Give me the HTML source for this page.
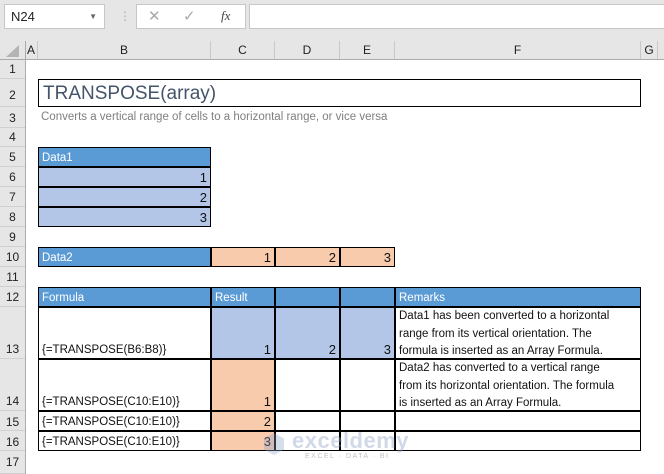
<!DOCTYPE html>
<html><head><style>
*{margin:0;padding:0;box-sizing:border-box}
body{width:664px;height:474px;overflow:hidden;background:#fff;font-family:"Liberation Sans",sans-serif;position:relative}
.a{position:absolute}
.ch{position:absolute;top:41px;height:18px;font-size:12px;color:#222;text-align:center;line-height:18px;border-right:1px solid #c8c8c8}
.rh{position:absolute;left:0;width:25px;font-size:12px;color:#222;text-align:center;border-bottom:1px solid #d0d0d0;background:#e6e6e6}
.c{position:absolute;font-size:11.5px;padding:0 3px;display:flex;align-items:flex-end;line-height:16px;color:#111;border:1px solid #000;margin:-1px 0 0 -1px;white-space:nowrap}
.h{background:#5b9bd5;color:#fff}
.b{background:#b4c6e7;justify-content:flex-end;font-size:13px}
.o{background:#f8cbad;justify-content:flex-end;font-size:13px}
</style></head><body>
<div class="a" style="left:0;top:0;width:664px;height:59px;background:#e6e6e6"></div>
<div class="a" style="left:4px;top:4px;width:101px;height:25px;background:#fff;border:1px solid #c6c6c6;font-size:13px;line-height:23px;padding-left:6px;color:#222">N24<span style="position:absolute;right:7px;top:0;font-size:8px;color:#666">▼</span></div>
<div class="a" style="left:119px;top:9px;color:#aaa;font-size:12px">⋮</div>
<div class="a" style="left:136px;top:4px;width:110px;height:25px;background:#fff;border:1px solid #c6c6c6"></div>
<div class="a" style="left:148px;top:7px;color:#aaa;font-size:15px">✕</div>
<div class="a" style="left:183px;top:7px;color:#aaa;font-size:15px">✓</div>
<div class="a" style="left:221px;top:8px;color:#444;font-size:13px;font-style:italic;font-family:'Liberation Serif',serif">fx</div>
<div class="a" style="left:249px;top:4px;width:420px;height:25px;background:#fff;border:1px solid #c6c6c6"></div>
<div class="a" style="left:0;top:59px;width:664px;height:1px;background:#ababab"></div>
<div class="a" style="left:25px;top:41px;width:1px;height:433px;background:#ababab"></div>
<div class="a" style="left:6px;top:45px;width:0;height:0;border-left:13px solid transparent;border-bottom:12px solid #b4b4b4"></div>
<div class="ch" style="left:25px;width:13px">A</div>
<div class="ch" style="left:38px;width:173px">B</div>
<div class="ch" style="left:211px;width:64px">C</div>
<div class="ch" style="left:275px;width:65px">D</div>
<div class="ch" style="left:340px;width:55px">E</div>
<div class="ch" style="left:395px;width:246px">F</div>
<div class="ch" style="left:641px;width:17px">G</div>
<div class="rh" style="top:60px;height:19px;line-height:19px">1</div>
<div class="rh" style="top:79px;height:28px;line-height:32px">2</div>
<div class="rh" style="top:107px;height:21px;line-height:22px">3</div>
<div class="rh" style="top:128px;height:19px;line-height:19px">4</div>
<div class="rh" style="top:147px;height:20px;line-height:20px">5</div>
<div class="rh" style="top:167px;height:20px;line-height:20px">6</div>
<div class="rh" style="top:187px;height:20px;line-height:20px">7</div>
<div class="rh" style="top:207px;height:20px;line-height:20px">8</div>
<div class="rh" style="top:227px;height:20px;line-height:20px">9</div>
<div class="rh" style="top:247px;height:20px;line-height:20px">10</div>
<div class="rh" style="top:267px;height:20px;line-height:20px">11</div>
<div class="rh" style="top:287px;height:20px;line-height:20px">12</div>
<div class="rh" style="top:307px;height:52px;line-height:84px">13</div>
<div class="rh" style="top:359px;height:52px;line-height:84px">14</div>
<div class="rh" style="top:411px;height:20px;line-height:22px">15</div>
<div class="rh" style="top:431px;height:20px;line-height:22px">16</div>
<div class="rh" style="top:451px;height:23px;line-height:22px">17</div>

<div class="a" style="left:38px;top:79px;width:603px;height:28px;border:1px solid #000;font-size:19px;line-height:27px;padding-left:4px;color:#44546a">TRANSPOSE(array)</div>
<div class="a" style="left:41px;top:111px;font-size:11.5px;color:#7f7f7f">Converts a vertical range of cells to a horizontal range, or vice versa</div>

<div class="c h" style="left:39px;top:148px;width:173px;height:20px">Data1</div>
<div class="c b" style="left:39px;top:168px;width:173px;height:20px">1</div>
<div class="c b" style="left:39px;top:188px;width:173px;height:20px">2</div>
<div class="c b" style="left:39px;top:208px;width:173px;height:20px">3</div>

<div class="c h" style="left:39px;top:248px;width:173px;height:20px">Data2</div>
<div class="c o" style="left:212px;top:248px;width:64px;height:20px">1</div>
<div class="c o" style="left:276px;top:248px;width:65px;height:20px">2</div>
<div class="c o" style="left:341px;top:248px;width:55px;height:20px">3</div>

<div class="c h" style="left:39px;top:288px;width:173px;height:20px">Formula</div>
<div class="c h" style="left:212px;top:288px;width:64px;height:20px">Result</div>
<div class="c h" style="left:276px;top:288px;width:65px;height:20px"></div>
<div class="c h" style="left:341px;top:288px;width:55px;height:20px"></div>
<div class="c h" style="left:396px;top:288px;width:246px;height:20px">Remarks</div>

<div class="c" style="left:39px;top:308px;width:173px;height:52px">{=TRANSPOSE(B6:B8)}</div>
<div class="c b" style="left:212px;top:308px;width:64px;height:52px">1</div>
<div class="c b" style="left:276px;top:308px;width:65px;height:52px">2</div>
<div class="c b" style="left:341px;top:308px;width:55px;height:52px">3</div>
<div class="c" style="left:396px;top:308px;width:246px;height:52px;line-height:17.5px;align-items:flex-start">Data1 has been converted to a horizontal<br>range from its vertical orientation. The<br>formula is inserted as an Array Formula.</div>

<div class="c" style="left:39px;top:360px;width:173px;height:52px">{=TRANSPOSE(C10:E10)}</div>
<div class="c o" style="left:212px;top:360px;width:64px;height:52px">1</div>
<div class="c" style="left:276px;top:360px;width:65px;height:52px"></div>
<div class="c" style="left:341px;top:360px;width:55px;height:52px"></div>
<div class="c" style="left:396px;top:360px;width:246px;height:52px;line-height:17.5px;align-items:flex-start">Data2 has converted to a vertical range<br>from its horizontal orientation. The formula<br>is inserted as an Array Formula.</div>

<div class="c" style="left:39px;top:412px;width:173px;height:20px">{=TRANSPOSE(C10:E10)}</div>
<div class="c o" style="left:212px;top:412px;width:64px;height:20px">2</div>
<div class="c" style="left:276px;top:412px;width:65px;height:20px"></div>
<div class="c" style="left:341px;top:412px;width:55px;height:20px"></div>
<div class="c" style="left:396px;top:412px;width:246px;height:20px"></div>

<div class="c" style="left:39px;top:432px;width:173px;height:20px">{=TRANSPOSE(C10:E10)}</div>
<div class="c o" style="left:212px;top:432px;width:64px;height:20px">3</div>
<div class="c" style="left:276px;top:432px;width:65px;height:20px"></div>
<div class="c" style="left:341px;top:432px;width:55px;height:20px"></div>
<div class="c" style="left:396px;top:432px;width:246px;height:20px"></div>

<div class="a" style="left:262px;top:432px;width:24px;height:24px;opacity:.35"><svg width="24" height="24" viewBox="0 0 24 24"><path d="M12 1 L22 6.5 V17.5 L12 23 L2 17.5 V6.5Z" fill="#8fa3c8"/></svg></div>
<div class="a" style="left:292px;top:428px;font-size:22px;font-weight:bold;color:#8fa3c8;opacity:.4;letter-spacing:.5px">exceldemy</div>
<div class="a" style="left:305px;top:453px;font-size:7px;color:#999;opacity:.6;letter-spacing:1.5px">EXCEL · DATA · BI</div>
</body></html>
